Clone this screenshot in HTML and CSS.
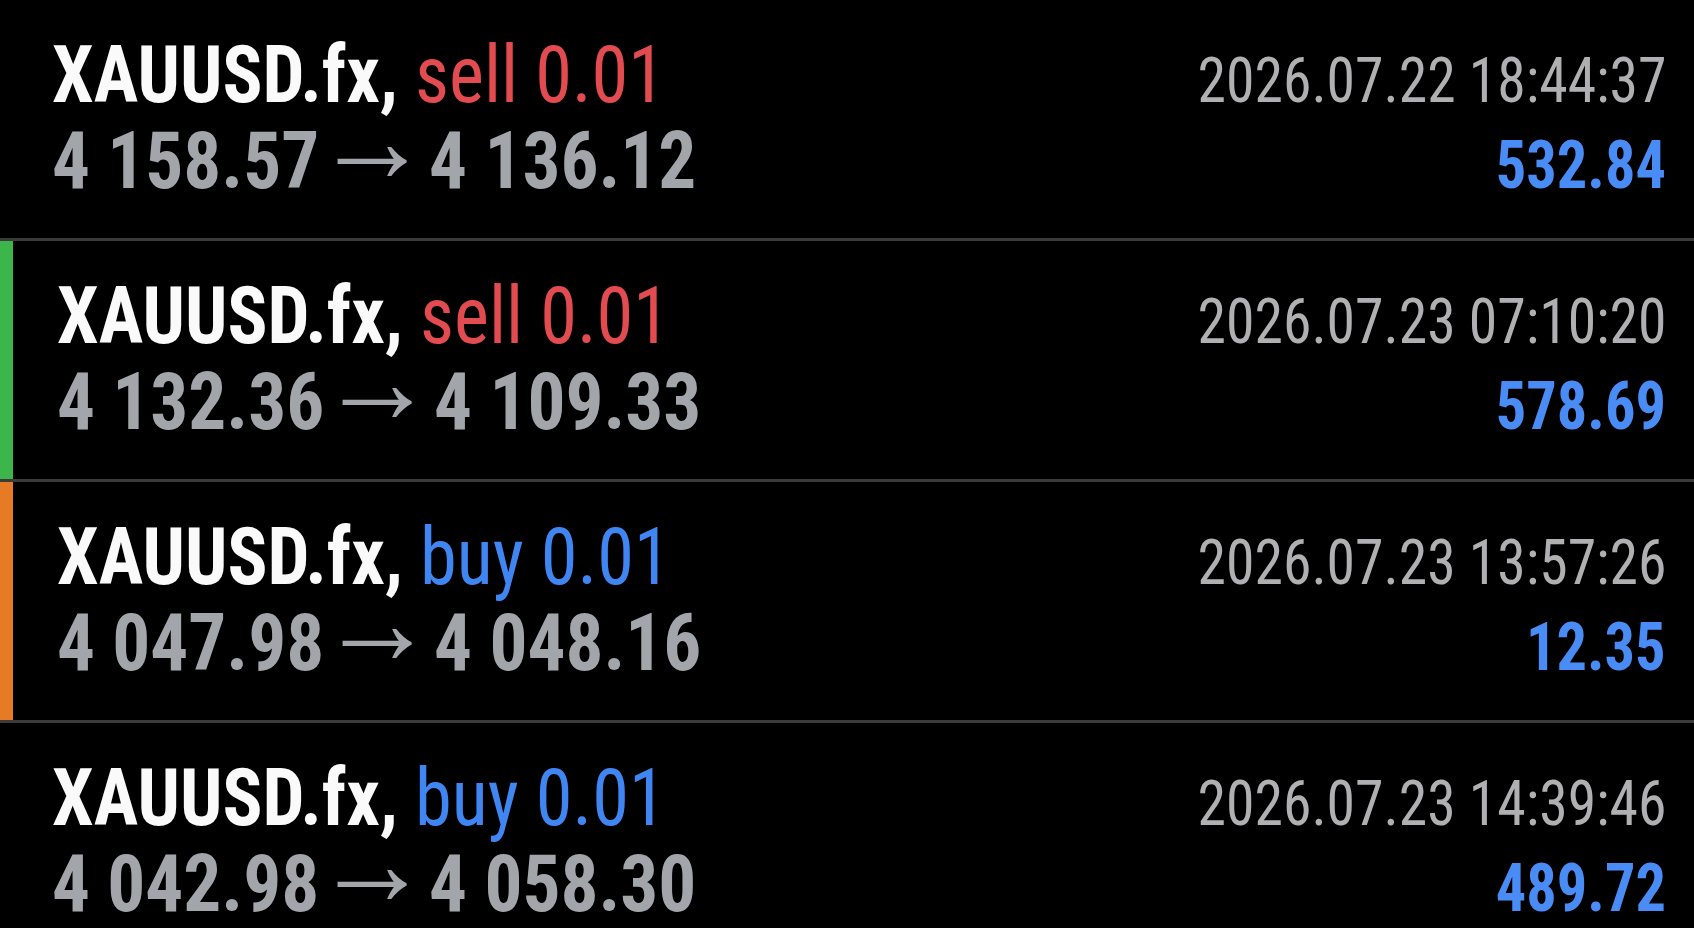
FILE: index.html
```html
<!DOCTYPE html>
<html lang="en">
<head>
    <meta charset="UTF-8">
    <meta name="viewport" content="width=device-width, initial-scale=1.0">
    <title>History</title>
    <link rel="stylesheet" href="styles.css">
</head>
<body>
    <div class="deals">
        <div class="deal">
            <div class="deal-line">
                <div class="deal-title">XAUUSD.fx, <span class="sell">sell 0.01</span></div>
                <div class="deal-time">2026.07.22 18:44:37</div>
            </div>
            <div class="deal-line">
                <div class="deal-prices">4 158.57 <span class="arrow">→</span> 4 136.12</div>
                <div class="deal-profit">532.84</div>
            </div>
        </div>

        <div class="deal mark-green">
            <div class="deal-line">
                <div class="deal-title">XAUUSD.fx, <span class="sell">sell 0.01</span></div>
                <div class="deal-time">2026.07.23 07:10:20</div>
            </div>
            <div class="deal-line">
                <div class="deal-prices">4 132.36 <span class="arrow">→</span> 4 109.33</div>
                <div class="deal-profit">578.69</div>
            </div>
        </div>

        <div class="deal mark-orange">
            <div class="deal-line">
                <div class="deal-title">XAUUSD.fx, <span class="buy">buy 0.01</span></div>
                <div class="deal-time">2026.07.23 13:57:26</div>
            </div>
            <div class="deal-line">
                <div class="deal-prices">4 047.98 <span class="arrow">→</span> 4 048.16</div>
                <div class="deal-profit">12.35</div>
            </div>
        </div>

        <div class="deal">
            <div class="deal-line">
                <div class="deal-title">XAUUSD.fx, <span class="buy">buy 0.01</span></div>
                <div class="deal-time">2026.07.23 14:39:46</div>
            </div>
            <div class="deal-line">
                <div class="deal-prices">4 042.98 <span class="arrow">→</span> 4 058.30</div>
                <div class="deal-profit">489.72</div>
            </div>
        </div>
    </div>
</body>
</html>
```

FILE: styles.css
```css
body {
    margin: 0;
    background: #000;
    font-family: "Roboto Condensed", "Roboto", sans-serif;
    overflow: hidden;
}
.deals {
    display: flex;
    flex-direction: column;
}
.deal {
    height: 241px;
    padding: 32px 28px 0 52px;
    box-sizing: border-box;
    border-bottom: 3px solid #3b3b3b;
}
.mark-green {
    box-shadow: inset 13px 0 0 #3cb54a;
    padding-left: 57px;
}
.mark-orange {
    box-shadow: inset 13px 0 0 #e77a24;
    padding-left: 57px;
}
.deal-line {
    display: flex;
    justify-content: space-between;
    align-items: baseline;
    line-height: 86px;
    white-space: nowrap;
}
/* the app font is narrower than Roboto Condensed */
.deal-title {
    transform: scaleX(0.93);
    transform-origin: left center;
}
.deal-prices {
    transform: scaleX(0.94);
    transform-origin: left center;
}
.deal-time, .deal-profit {
    transform: scaleX(0.915);
    transform-origin: right center;
    line-height: 74px;
}
.deal-title {
    font-size: 80px;
    font-weight: bold;
    color: #fafafa;
}
.sell {
    font-weight: normal;
    color: #e24b50;
}
.buy {
    font-weight: normal;
    color: #4086f3;
}
.deal-prices {
    font-size: 80px;
    font-weight: bold;
    color: #a2a5aa;
}
.arrow {
    font-family: "Roboto", sans-serif;
    font-weight: normal;
    font-size: 124px;
    line-height: 0;
    vertical-align: 6px;
    margin: 0 -20px 0 -24px;
}
.deal-time {
    font-size: 63px;
    color: #b0b0b3;
}
.deal-profit {
    font-size: 66px;
    font-weight: bold;
    color: #4a8cf5;
}
```
